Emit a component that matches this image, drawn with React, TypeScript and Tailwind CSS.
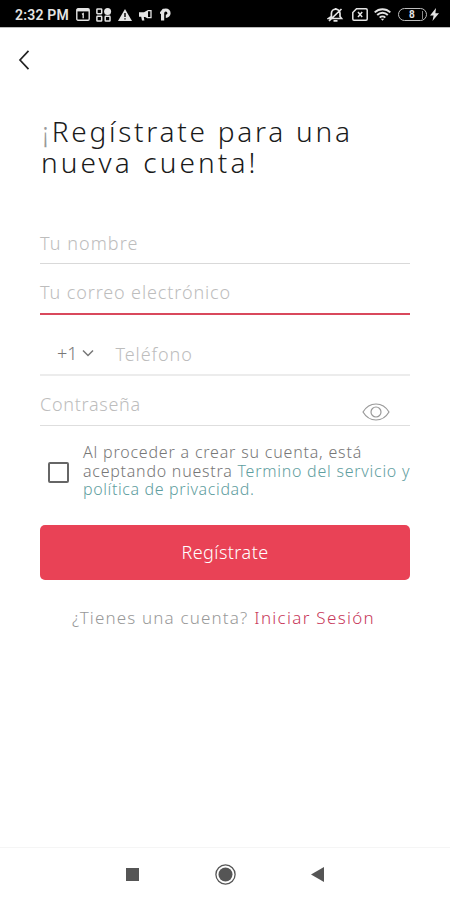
import type { ReactNode } from "react";

function StatusBar() {
  return (
    <header className="flex h-[27px] items-center bg-black pt-[2px] text-[#e4e4e4]">
      <span className="ml-[15px] w-[55px] whitespace-nowrap font-['Roboto',sans-serif] text-[14px] font-semibold leading-none tracking-[0.2px]">
        2:32 PM
      </span>
      <svg className="ml-[6px]" width="14" height="13" viewBox="0 0 14 13" fill="none" stroke="currentColor">
        <rect x="0.8" y="0.8" width="12.4" height="11.4" rx="1.2" strokeWidth="1.4" />
        <path d="M1 2.2h12" strokeWidth="2.4" />
        <path d="M6 6.4l1.2-.8v4.6" strokeWidth="1.3" />
      </svg>
      <svg className="ml-[6px]" width="16" height="14" viewBox="0 0 16 14" fill="none" stroke="currentColor" strokeWidth="1.5">
        <rect x="0.9" y="0.9" width="4.8" height="4.8" rx="0.6" />
        <circle cx="11.6" cy="3.5" r="3.5" fill="currentColor" stroke="none" />
        <rect x="0.9" y="8.3" width="4.8" height="4.8" rx="0.6" />
        <rect x="9.2" y="8.3" width="4.8" height="4.8" rx="0.6" />
      </svg>
      <svg className="ml-[6px]" width="14" height="12" viewBox="0 0 14 12">
        <path d="M7 0l7 12H0z" fill="currentColor" />
        <path d="M7 4v4M7 9.2v1.4" stroke="#000" strokeWidth="1.4" />
      </svg>
      <svg className="ml-[7px]" width="13" height="12" viewBox="0 0 13 12" fill="currentColor">
        <path d="M0 3.2h5L9 1v8.5L6 8H4.8l.6 3.4H3L2.2 7.8H0z" />
        <path d="M9 1.6h3v7H9" fill="none" stroke="currentColor" strokeWidth="1.3" />
      </svg>
      <svg className="ml-[8px]" width="11" height="13" viewBox="0 0 11 13">
        <path d="M2.6 12.6V5.2a3.2 3.2 0 1 1 3.2 3.2" fill="none" stroke="currentColor" strokeWidth="3.2" />
        <path d="M0 5.5L3.8 1.2" stroke="currentColor" strokeWidth="1.8" />
      </svg>

      <svg className="ml-auto" width="17" height="14" viewBox="0 0 17 14" fill="none" stroke="currentColor" strokeWidth="1.7">
        <path d="M1.5 10.5h13L13 8.5V5.5a4.3 4.3 0 0 0-8.6 0v3zM6.5 12.8h4M8.700 0v2M2 13L14.5 1" />
      </svg>
      <svg className="ml-[8px]" width="16" height="13" viewBox="0 0 16 13" fill="none" stroke="currentColor" strokeWidth="1.5">
        <path d="M4.5.8H14A1.2 1.2 0 0 1 15.2 2v9a1.2 1.2 0 0 1-1.2 1.2H2A1.2 1.2 0 0 1 .8 11V4.5z" />
        <path d="M6 4l4.2 5M10.2 4L6 9" />
      </svg>
      <svg className="ml-[6px]" width="17" height="13" viewBox="0 0 17 13" fill="none" stroke="currentColor" strokeWidth="1.9">
        <path d="M.7 4.4c4.5-4.3 11.100-4.300 15.600 0M3.200 7c3.100-3 7.500-3 10.600 0M5.700 9.600c1.600-1.600 4-1.600 5.600 0" />
        <path d="M6.800 10.800h3.400L8.500 12.800z" fill="currentColor" stroke="none" />
      </svg>
      <div className="ml-[7px] flex h-[13px] w-[29px] items-center rounded-full border-[1.5px] border-[#bdbdbd] font-['Roboto',sans-serif] text-[10px] font-bold leading-none">
        <span className="ml-[10px]">8</span>
        <i className="mr-[3px] ml-auto h-[8px] w-[1.5px] bg-[#8a8a8a]" />
      </div>
      <svg className="mr-[11px] ml-[3px]" width="9" height="13" viewBox="0 0 9 13">
        <path d="M6 0L0 7.5h3.600L2.500 13 9 5.300H5.400z" fill="currentColor" />
      </svg>
    </header>
  );
}

function Field({ className, children }: { className: string; children: ReactNode }) {
  return (
    <div className={`flex border-b text-[18px] font-light text-[#bdbdbd] ${className}`}>
      {children}
    </div>
  );
}

function NavBar() {
  return (
    <nav className="flex h-[53px] items-center border-t border-[#f5f5f5] text-[#555]">
      <div className="ml-[126px] size-[13px] bg-[#555]" />
      <svg className="ml-[76px]" width="21" height="21" viewBox="0 0 21 21">
        <circle cx="10.5" cy="10.5" r="9.6" fill="none" stroke="currentColor" strokeWidth="1.3" />
        <circle cx="10.5" cy="10.5" r="7" fill="currentColor" />
      </svg>
      <svg className="ml-[75px]" width="13" height="15" viewBox="0 0 13 15">
        <path d="M13 0v15L0 7.5z" fill="currentColor" />
      </svg>
    </nav>
  );
}

export default function App() {
  return (
    <div className="flex h-[900px] w-[450px] flex-col overflow-hidden bg-white font-['Noto_Sans',sans-serif]">
      <StatusBar />
      <div className="h-[89px] border-t border-[#bbb]">
        <svg className="mt-[22px] ml-[18px]" width="12" height="20" viewBox="0 0 12 20" fill="none" stroke="#222" strokeWidth="1.7">
          <path d="M10.5.8L2 10l8.5 9.2" />
        </svg>
      </div>

      <main className="flex flex-1 flex-col px-10">
        <h1 className="h-[110px] text-[28px] font-light leading-[31px] text-[#1a1a1a]">
          <span className="ml-[2px] block w-max tracking-[2.75px]">
            <span className="text-[#999]">¡</span>Regístrate para una
          </span>
          <span className="ml-px block w-max tracking-[3.1px]">nueva cuenta!</span>
        </h1>

        <Field className="h-[38px] border-[#d9d9d9] pt-[4px]">
          <span className="h-[28px] tracking-[1.05px]">Tu nombre</span>
        </Field>
        <Field className="h-[51px] border-b-2 border-[#d9485c] pt-[15px]">
          <span className="tracking-[0.88px]">Tu correo electrónico</span>
        </Field>
        <Field className="h-[61px] border-b-2 border-[#ececec] pt-[25px]">
          <span className="ml-[17px] text-[#777]">+1</span>
          <svg className="mt-[9px] ml-[4px]" width="12" height="9" viewBox="0 0 12 9" fill="none" stroke="#777" strokeWidth="1.5">
            <path d="M1 1.5l5 5 5-5" />
          </svg>
          <span className="mt-px ml-[22px] tracking-[0.9px]">Teléfono</span>
        </Field>
        <Field className="h-[50px] justify-between border-[#dedede] pt-[14px]">
          <span className="mt-px tracking-[0.7px]">Contraseña</span>
          <svg className="mt-[13px] mr-[20px]" width="28" height="18" viewBox="0 0 28 18" fill="none" stroke="#999" strokeWidth="1.2">
            <path d="M1 9C4 4 8.500 1 14 1s10 3 13 8c-3 5-7.500 8-13 8S4 14 1 9z" />
            <circle cx="14" cy="9" r="5" />
          </svg>
        </Field>

        <div className="flex h-[99px] pt-[17px]">
          <div className="mt-[19px] ml-[8px] size-[21px] shrink-0 rounded-[2px] border-2 border-[#666]" />
          <p className="ml-[14px] text-[16px] font-light leading-[18.5px] whitespace-nowrap text-[#777]">
            <span className="block w-max tracking-[0.8px]">Al proceder a crear su cuenta, está</span>
            <span className="block w-max tracking-[0.75px]">
              aceptando nuestra <span className="text-[#5f9ea0]">Termino del servicio y</span>
            </span>
            <span className="block w-max tracking-[0.62px] text-[#5f9ea0]">política de privacidad.</span>
          </p>
        </div>

        <button className="h-[55px] w-[370px] rounded-[5px] bg-[#e94256] text-[18px] font-light text-white">
          <span className="tracking-[0.45px]">Regístrate</span>
        </button>

        <p className="ml-[32px] pt-[26px] text-[17px] font-light leading-6 whitespace-nowrap text-[#999]">
          <span className="tracking-[1.15px]">¿Tienes una cuenta?</span>
          <span className="ml-[6px] font-[350] tracking-[1.3px] text-[#c8385a]">Iniciar Sesión</span>
        </p>
      </main>

      <NavBar />
    </div>
  );
}
